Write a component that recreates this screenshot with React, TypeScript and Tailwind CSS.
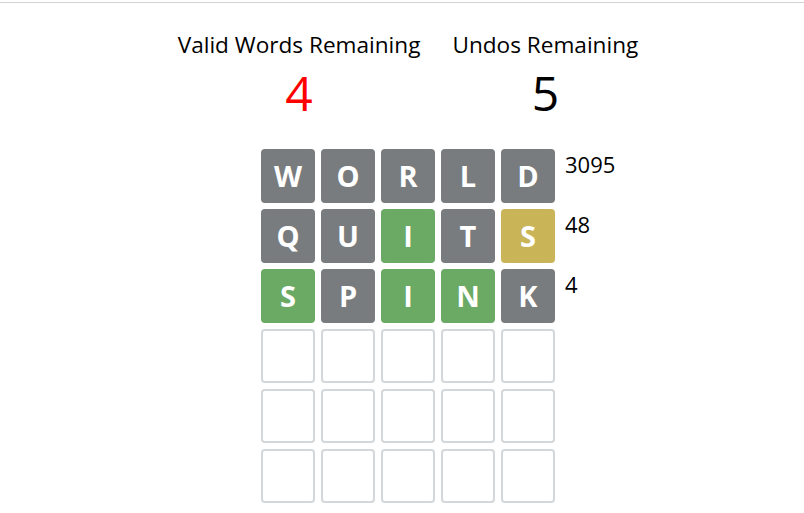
import React from 'react';

type TileState = 'absent' | 'present' | 'correct' | 'empty';

const rows: { letters: string; states: TileState[]; count?: number }[] = [
    { letters: 'WORLD', states: ['absent', 'absent', 'absent', 'absent', 'absent'], count: 3095 },
    { letters: 'QUITS', states: ['absent', 'absent', 'correct', 'absent', 'present'], count: 48 },
    { letters: 'SPINK', states: ['correct', 'absent', 'correct', 'correct', 'absent'], count: 4 },
    { letters: '', states: ['empty', 'empty', 'empty', 'empty', 'empty'] },
    { letters: '', states: ['empty', 'empty', 'empty', 'empty', 'empty'] },
    { letters: '', states: ['empty', 'empty', 'empty', 'empty', 'empty'] },
];

const tileClass: Record<TileState, string> = {
    absent: 'bg-[#787c7e] text-white',
    present: 'bg-[#c9b458] text-white',
    correct: 'bg-[#6aaa64] text-white',
    empty: 'border-2 border-[#d3d6da] bg-white',
};

const Tile: React.FC<{ letter?: string; state: TileState }> = ({ letter, state }) => (
    <div
        className={`w-[54px] h-[54px] rounded-[4px] flex items-center justify-center text-[29px] font-bold ${tileClass[state]}`}
    >
        {letter}
    </div>
);

const App: React.FC = () => {
    return (
        <div className="min-h-screen bg-white" style={{ fontFamily: '"Open Sans", "Noto Sans", sans-serif' }}>
            {/* Top rule */}
            <div className="pt-[2px]">
                <div className="h-px bg-[#d3d3d3]" />
            </div>

            <div className="flex flex-col items-center pl-[12px]">
                {/* Stats */}
                <div className="flex gap-[32px] mt-[27px] text-black">
                    <div className="flex flex-col items-center">
                        <span className="text-[22.6px] leading-[30px]">Valid Words Remaining</span>
                        <span className="text-[48px] leading-[60px] pt-[3px] text-[#ff0000]">4</span>
                    </div>
                    <div className="flex flex-col items-center">
                        <span className="text-[22.6px] leading-[30px]">Undos Remaining</span>
                        <span className="text-[48px] leading-[60px] pt-[3px]">5</span>
                    </div>
                </div>

                {/* Board */}
                <div className="flex flex-col gap-[6px] mt-[26px]">
                    {rows.map((row, r) => (
                        <div key={r} className="relative flex gap-[6px]">
                            {row.states.map((s, i) => (
                                <Tile key={i} state={s} letter={row.letters[i]} />
                            ))}
                            {row.count !== undefined && (
                                <span className="absolute left-full top-0 ml-[10px] text-[22px] leading-[30px] text-black">
                                    {row.count}
                                </span>
                            )}
                        </div>
                    ))}
                </div>
            </div>
        </div>
    );
};

export default App;
